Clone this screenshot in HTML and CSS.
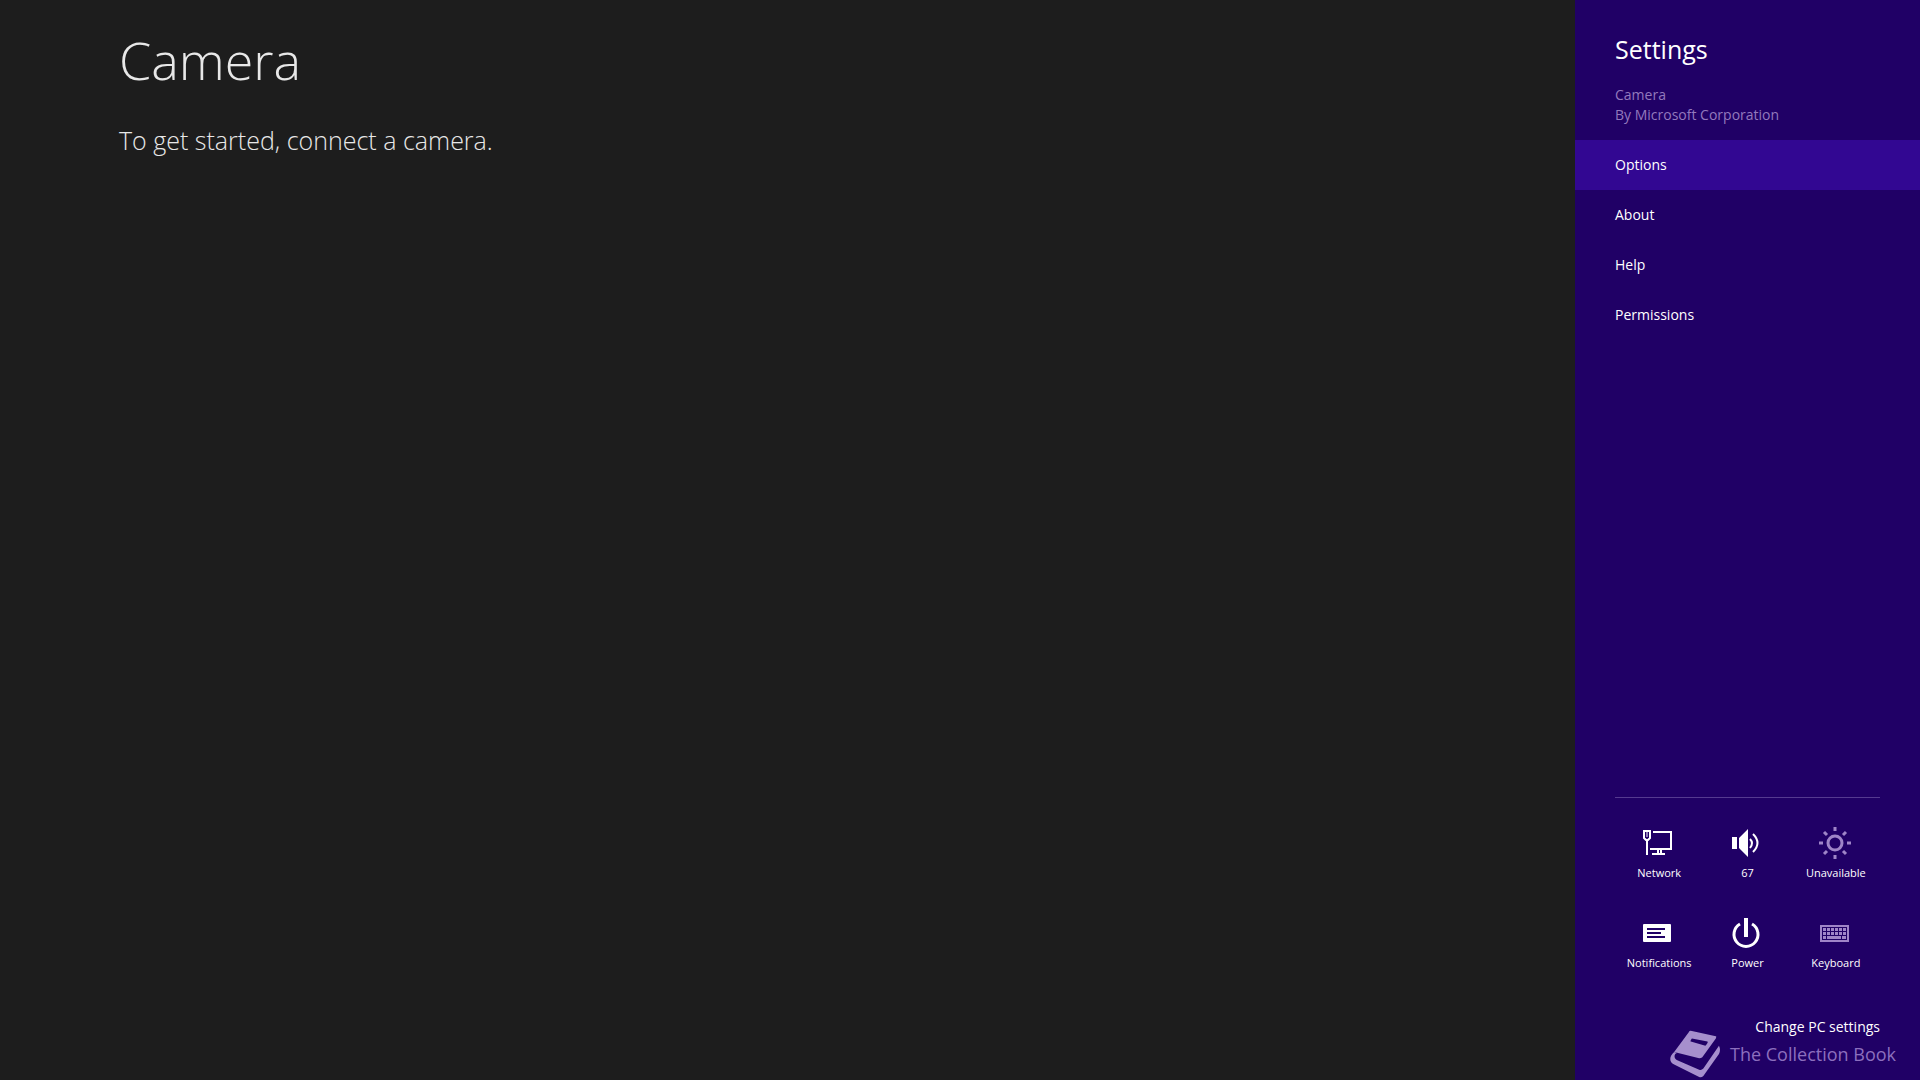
FILE: index.html
```html
<!DOCTYPE html>
<html lang="en">
<head>
  <meta charset="UTF-8">
  <meta name="viewport" content="width=device-width, initial-scale=1.0">
  <title>Camera</title>
  <link rel="stylesheet" href="styles.css">
</head>
<body>
  <main class="app">
    <h1>Camera</h1>
    <p>To get started, connect a camera.</p>
  </main>

  <aside class="settings">
    <header class="settings-header">
      <h2>Settings</h2>
      <p>Camera<br>By Microsoft Corporation</p>
    </header>

    <nav class="menu">
      <a href="#options" class="active">Options</a>
      <a href="#about">About</a>
      <a href="#help">Help</a>
      <a href="#permissions">Permissions</a>
    </nav>

    <div class="quick">
      <button type="button" class="tile">
        <svg viewBox="0 0 32 32" fill="none" stroke="currentColor" stroke-width="2">
          <path d="M10 5h18v17H7"/>
          <path d="M15 22h3v5h-3zM9 27h13"/>
          <path d="M4 28V13"/>
          <path d="M1 4h6v7l-2 2H3l-2-2z"/>
          <path d="M4 5v5" stroke-width="1"/>
        </svg>
        <span>Network</span>
      </button>
      <button type="button" class="tile">
        <svg viewBox="0 0 32 32" fill="currentColor">
          <path d="M1 10h5v12H1zM8 11l9-9v28l-9-9z"/>
          <path d="M19 12q4 4 0 9M22 7q9 9 0 18" fill="none" stroke="currentColor" stroke-width="2"/>
        </svg>
        <span>67</span>
      </button>
      <button type="button" class="tile dim">
        <svg viewBox="0 0 32 32" fill="none" stroke="currentColor" stroke-width="3">
          <circle cx="15" cy="16" r="7"/>
          <path d="M15 0v4M15 28v4M-1 16h4M27 16h4M4 5l3 3M23 24l3 3M26 5l-3 3M7 24l-3 3"/>
        </svg>
        <span>Unavailable</span>
      </button>
      <button type="button" class="tile">
        <svg viewBox="0 0 32 32">
          <rect x="0" y="7" width="28" height="18" rx="1" fill="currentColor"/>
          <path d="M4 12h18M4 16h14M4 20h18" stroke="#200066" stroke-width="2"/>
        </svg>
        <span>Notifications</span>
      </button>
      <button type="button" class="tile">
        <svg viewBox="0 0 32 32" fill="none" stroke="currentColor">
          <path d="M9 7a12 12 0 1 0 12 0" stroke-width="3"/>
          <path d="M15 1v19" stroke-width="4"/>
        </svg>
        <span>Power</span>
      </button>
      <button type="button" class="tile dim">
        <svg viewBox="0 0 32 32" fill="none" stroke="currentColor">
          <rect x="1" y="9" width="27" height="15" stroke-width="2"/>
          <path d="M3 12.500h23M3 16.500h23" stroke-width="3" stroke-dasharray="3 1"/>
          <path d="M3 20.500h3M7 20.500h14M22 20.500h4" stroke-width="3"/>
        </svg>
        <span>Keyboard</span>
      </button>
    </div>

    <a href="#pc-settings" class="pc-settings">Change PC settings</a>

    <div class="brand">
      <svg viewBox="1 0 48 46">
        <path d="M19 2q1-2 3-1l23 5q1 0 0 2L32 26q-1 1-3 1L5 21z" fill="currentColor"/>
        <path d="M22 8l15 3q1 1-2 4l-14-4q-1 0 1-3z" fill="#200066"/>
        <path d="M5 21c-5 4-5 10 0 12l24 12q2 1 4-1L48 23q2-4 0-8L33 37q-2 2-4 1L8 29c-4-2-3-7 0-7z" fill="currentColor"/>
      </svg>
      <span>The Collection Book</span>
    </div>
  </aside>
</body>
</html>
```
FILE: styles.css
```css
* {
  box-sizing: border-box;
}

body {
  display: flex;
  min-height: 100vh;
  margin: 0;
  background-color: #1d1d1d;
  color: #fff;
  font-family: "Open Sans", "Noto Sans", sans-serif;
  font-size: 14px;
}

h1, h2, p {
  margin: 0;
  font-weight: 300;
}

a {
  color: inherit;
  text-decoration: none;
}

.app {
  flex: 1;
  padding: 24px 119px;
  color: #e8e8e8;
}

.app h1 {
  font-size: 52px;
  line-height: 72px;
}

.app p {
  margin-top: 28px;
  font-size: 25px;
  line-height: 32px;
}

.settings {
  position: relative;
  display: flex;
  flex-direction: column;
  width: 345px;
  padding-bottom: 43px;
  background-color: #200066;
}

.settings-header {
  padding: 32px 40px 15px;
}

.settings-header h2 {
  font-size: 25px;
  font-weight: 400;
  line-height: 35px;
}

.settings-header p {
  margin-top: 18px;
  color: #9379bd;
  font-weight: 400;
  line-height: 20px;
}

.menu a {
  display: block;
  padding: 0 40px;
  line-height: 50px;
}

.menu a.active,
.menu a:hover {
  background-color: #320792;
}

.quick {
  display: grid;
  grid-template-columns: repeat(3, 1fr);
  row-gap: 36px;
  margin: auto 40px 0;
  padding-top: 29px;
  border-top: 1px solid #553a90;
}

.tile {
  display: flex;
  flex-direction: column;
  align-items: center;
  gap: 6px;
  padding: 0;
  border: none;
  background: none;
  color: #fff;
  font-family: inherit;
  font-size: 11px;
  line-height: 16px;
  cursor: pointer;
}

.tile svg {
  width: 32px;
  height: 32px;
  overflow: visible;
}

.tile.dim svg {
  color: #9f85c8;
}

.pc-settings {
  align-self: flex-end;
  margin: 46px 40px 0 0;
  line-height: 20px;
}

/* logo sits over the bottom edge of the panel */
.brand {
  position: absolute;
  right: 24px;
  bottom: 2px;
  display: flex;
  align-items: center;
  gap: 10px;
  color: #a68fcd;
  font-size: 18px;
  white-space: nowrap;
}

.brand svg {
  width: 50px;
  height: 48px;
}

.brand span {
  color: #8c6fbe;
}
```
